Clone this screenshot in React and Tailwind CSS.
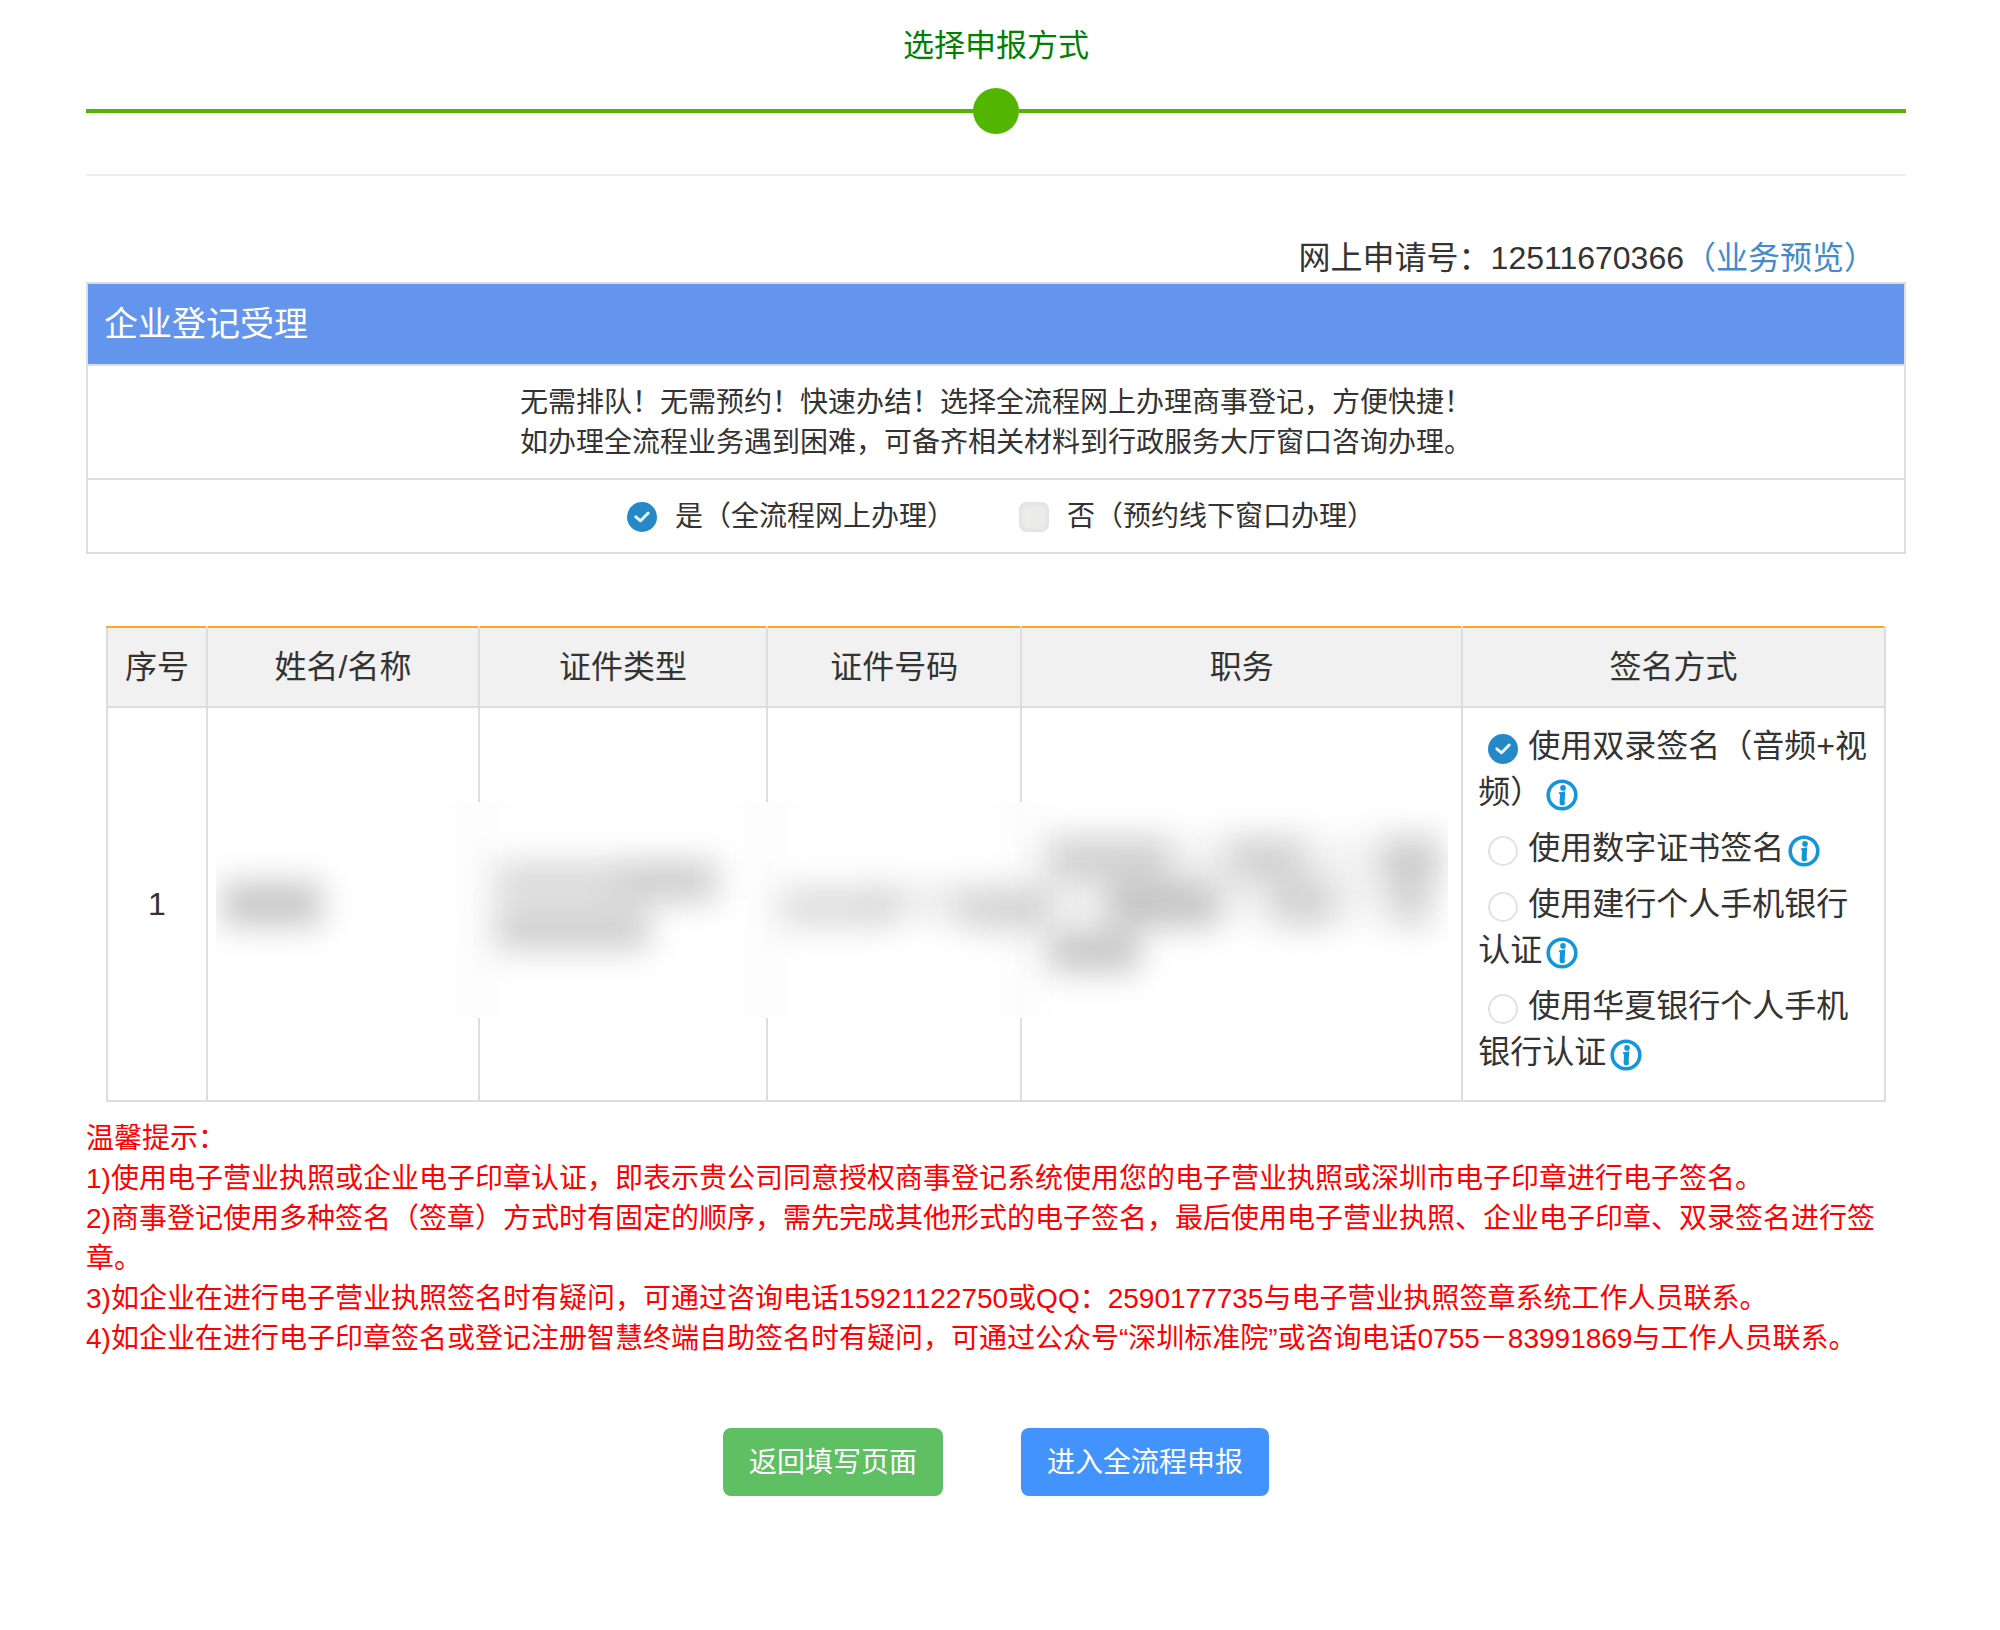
import { useState } from 'react'

const COLUMNS = [
  { title: '序号', width: 'w-[100px]' },
  { title: '姓名/名称', width: 'w-[15.3%]' },
  { title: '证件类型', width: 'w-[16.2%]' },
  { title: '证件号码', width: 'w-[14.3%]' },
  { title: '职务', width: 'w-[24.8%]' },
  { title: '签名方式', width: '' },
]

const MODES = [
  { id: 'online', label: '是（全流程网上办理）' },
  { id: 'offline', label: '否（预约线下窗口办理）' },
]

const SIGN_METHODS = [
  { id: 'video', label: '使用双录签名（音频+视频）' },
  { id: 'cert', label: '使用数字证书签名' },
  { id: 'ccb', label: '使用建行个人手机银行认证' },
  { id: 'hxb', label: '使用华夏银行个人手机银行认证' },
]

const TIPS = [
  '温馨提示：',
  '1)使用电子营业执照或企业电子印章认证，即表示贵公司同意授权商事登记系统使用您的电子营业执照或深圳市电子印章进行电子签名。',
  '2)商事登记使用多种签名（签章）方式时有固定的顺序，需先完成其他形式的电子签名，最后使用电子营业执照、企业电子印章、双录签名进行签章。',
  '3)如企业在进行电子营业执照签名时有疑问，可通过咨询电话15921122750或QQ：2590177735与电子营业执照签章系统工作人员联系。',
  '4)如企业在进行电子印章签名或登记注册智慧终端自助签名时有疑问，可通过公众号“深圳标准院”或咨询电话0755－83991869与工作人员联系。',
]

// x, y, width, height, opacity
const SMUDGES = [
  [248, -40, 30, 296, 0.015],
  [536, -40, 30, 296, 0.015],
  [790, -40, 30, 296, 0.015],
  [6, 80, 100, 44, 0.22],
  [280, 60, 220, 40, 0.15],
  [400, 56, 104, 42, 0.05],
  [280, 106, 154, 42, 0.19],
  [566, 84, 110, 42, 0.13],
  [660, 82, 90, 36, 0.08],
  [744, 84, 90, 44, 0.16],
  [830, 34, 390, 86, 0.05],
  [830, 34, 124, 46, 0.13],
  [1012, 34, 76, 46, 0.13],
  [1166, 34, 60, 46, 0.15],
  [892, 80, 110, 46, 0.19],
  [1056, 78, 62, 48, 0.13],
  [1176, 76, 38, 50, 0.12],
  [832, 128, 92, 42, 0.22],
]

function Radio({ name, checked, onChange, square = false }) {
  return (
    <span className="relative inline-block h-[30px] w-[30px] align-middle">
      <input
        type="radio"
        name={name}
        checked={checked}
        onChange={onChange}
        className={
          square
            ? 'block h-full w-full cursor-pointer appearance-none rounded-lg bg-[#ececeb] shadow-[inset_0_0_6px_1px_#dddddb] checked:rounded-full checked:bg-[#2489c5] checked:shadow-none'
            : 'block h-full w-full cursor-pointer appearance-none rounded-full border-2 border-[#e4e2de] bg-white checked:border-0 checked:bg-[#2489c5]'
        }
      />
      {checked && (
        <svg viewBox="0 0 30 30" className="pointer-events-none absolute inset-0 h-full w-full">
          <path
            d="M8.8 14.8 L13.6 18.8 L21.2 11"
            fill="none"
            stroke="#e9f4fa"
            strokeWidth="3"
            strokeLinecap="round"
            strokeLinejoin="round"
          />
        </svg>
      )}
    </span>
  )
}

function InfoIcon() {
  return (
    <svg viewBox="0 0 32 32" className="block h-8 w-8" fill="#1296db">
      <circle cx="16" cy="16" r="13.8" fill="none" stroke="#1296db" strokeWidth="3.6" />
      <circle cx="17" cy="8.9" r="2.8" />
      <path d="M13 13.2 Q15.6 13.4 18.8 12.2 L19.2 12.6 L18.6 23 Q18.6 24 19.4 23.8 Q19 26.3 16.2 26.4 Q13.4 26.4 13.6 23.6 L14 15.8 Q13.9 14.8 12.9 14.8 Z" />
    </svg>
  )
}

export default function App() {
  const [mode, setMode] = useState('online')
  const [method, setMethod] = useState('video')

  return (
    <div className="min-h-screen bg-white pt-6 pr-[94px] pb-16 pl-[86px] font-['Liberation_Sans','Noto_Sans_CJK_SC',sans-serif] text-[#333]">
      {/* 步骤 */}
      <header>
        <h1 className="text-center text-[31px] leading-[44px] text-[#008000]">选择申报方式</h1>
        <div className="mt-5 flex items-center">
          <span className="h-1 flex-1 bg-[#52b500]" />
          <span className="h-[46px] w-[46px] rounded-full bg-[#52b500]" />
          <span className="h-1 flex-1 bg-[#52b500]" />
        </div>
      </header>
      <hr className="mt-10 border-t-2 border-[#eee]" />

      <p className="mt-[58px] pr-[30px] text-right text-[32px] leading-[48px]">
        网上申请号：12511670366
        <a href="#preview" className="text-[#428bca]">
          （业务预览）
        </a>
      </p>

      {/* 办理方式 */}
      <section className="divide-y-2 divide-[#ddd] border-2 border-[#ddd]">
        <h2 className="bg-[#6495ed] px-4 text-[34px] leading-[80px] text-white">企业登记受理</h2>
        <div className="flex justify-center pt-[17px] pb-[15px] text-[28px] leading-10">
          <p>
            无需排队！无需预约！快速办结！选择全流程网上办理商事登记，方便快捷！
            <br />
            如办理全流程业务遇到困难，可备齐相关材料到行政服务大厅窗口咨询办理。
          </p>
        </div>
        <div className="flex justify-center gap-16 pt-[17px] pb-[15px] pl-[10px] text-[28px] leading-10">
          {MODES.map((m) => (
            <label key={m.id} className="flex cursor-pointer items-center gap-[18px]">
              <Radio name="mode" square checked={mode === m.id} onChange={() => setMode(m.id)} />
              {m.label}
            </label>
          ))}
        </div>
      </section>

      {/* 签名人员 */}
      <div className="relative mx-5 mt-[72px]">
        <table className="w-full table-fixed border-collapse text-[32px] leading-[46px]">
          <thead>
            <tr className="bg-[#f1f1f1]">
              {COLUMNS.map((c) => (
                <th
                  key={c.title}
                  className={`h-20 border-2 border-[#ddd] border-t-[#ffa81c] font-normal ${c.width}`}
                >
                  {c.title}
                </th>
              ))}
            </tr>
          </thead>
          <tbody>
            <tr>
              <td className="border-2 border-[#ddd] text-center">1</td>
              <td className="border-2 border-[#ddd]" />
              <td className="border-2 border-[#ddd]" />
              <td className="border-2 border-[#ddd]" />
              <td className="border-2 border-[#ddd]" />
              <td className="border-2 border-[#ddd] px-[15px] py-[15px]">
                {SIGN_METHODS.map((s) => (
                  <div key={s.id} className="mb-[10px]">
                    <label className="cursor-pointer">
                      <span className="mx-[10px]">
                        <Radio
                          name="method"
                          checked={method === s.id}
                          onChange={() => setMethod(s.id)}
                        />
                      </span>
                      {s.label}
                    </label>
                    <button type="button" aria-label="说明" className="ml-1 cursor-pointer align-middle">
                      <InfoIcon />
                    </button>
                  </div>
                ))}
              </td>
            </tr>
          </tbody>
        </table>

        {/* 脱敏遮罩 */}
        <svg
          viewBox="0 0 1232 216"
          preserveAspectRatio="none"
          className="absolute top-44 left-[6.2%] h-[216px] w-[69.2%] bg-white"
          aria-hidden="true"
        >
          <defs>
            <filter id="smudge" x="-100%" y="-150%" width="300%" height="400%">
              <feGaussianBlur stdDeviation="16" />
            </filter>
          </defs>
          {SMUDGES.map(([x, y, w, h, o]) => (
            <rect
              key={`${x}-${y}-${w}`}
              x={x}
              y={y}
              width={w}
              height={h}
              fill="#000"
              fillOpacity={o}
              filter="url(#smudge)"
            />
          ))}
        </svg>
      </div>

      {/* 温馨提示 */}
      <section className="mt-[17px] text-[28px] leading-10 text-[#f00]">
        {TIPS.map((t) => (
          <p key={t}>{t}</p>
        ))}
      </section>

      <div className="mt-[69px] flex justify-center gap-[78px] text-[28px] leading-10 text-white">
        <button type="button" className="cursor-pointer rounded-lg bg-[#5fbf63] px-[26px] pt-[15px] pb-[13px]">
          返回填写页面
        </button>
        <button type="button" className="cursor-pointer rounded-lg bg-[#4294fc] px-[26px] pt-[15px] pb-[13px]">
          进入全流程申报
        </button>
      </div>
    </div>
  )
}
